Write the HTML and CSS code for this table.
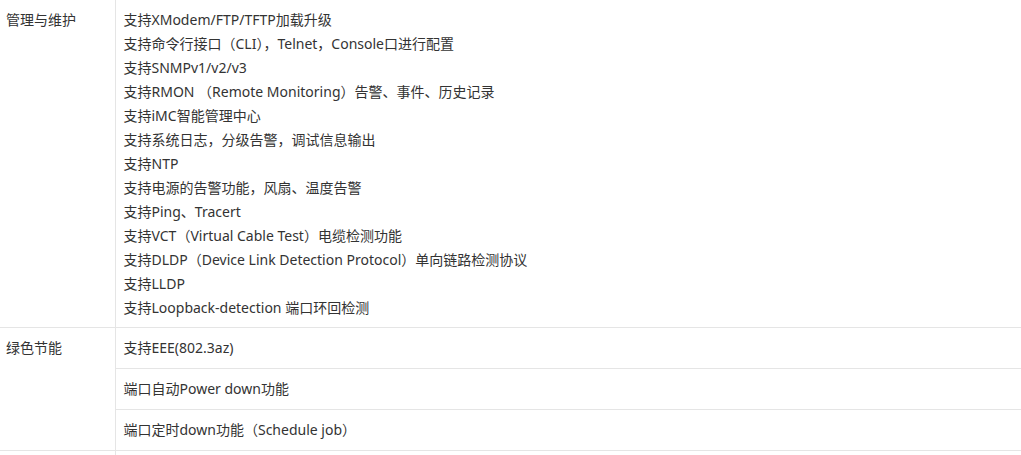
FILE: index.html
```html
<!DOCTYPE html>
<html lang="zh-CN">
<head>
    <meta charset="UTF-8">
    <meta name="viewport" content="width=device-width, initial-scale=1.0">
    <title>产品规格</title>
    <link rel="stylesheet" href="styles.css">
</head>
<body>
    <table class="spec-table">
        <colgroup>
            <col class="col-name">
            <col class="col-value">
        </colgroup>
        <tr class="first-row">
            <td class="name">管理与维护</td>
            <td class="value">
                支持XModem/FTP/TFTP加载升级<br>
                支持命令行接口（CLI），Telnet，Console口进行配置<br>
                支持SNMPv1/v2/v3<br>
                支持RMON （Remote Monitoring）告警、事件、历史记录<br>
                支持iMC智能管理中心<br>
                支持系统日志，分级告警，调试信息输出<br>
                支持NTP<br>
                支持电源的告警功能，风扇、温度告警<br>
                支持Ping、Tracert<br>
                支持VCT（Virtual Cable Test）电缆检测功能<br>
                支持DLDP（Device Link Detection Protocol）单向链路检测协议<br>
                支持LLDP<br>
                支持Loopback-detection 端口环回检测
            </td>
        </tr>
        <tr>
            <td class="name" rowspan="3">绿色节能</td>
            <td class="value">支持EEE(802.3az)</td>
        </tr>
        <tr>
            <td class="value">端口自动Power down功能</td>
        </tr>
        <tr>
            <td class="value">端口定时down功能（Schedule job）</td>
        </tr>
        <tr>
            <td class="name">&nbsp;</td>
            <td class="value">&nbsp;</td>
        </tr>
    </table>
</body>
</html>
```

FILE: styles.css
```css
body {
    margin: 0;
    overflow: hidden;
    background-color: #fff;
    font-family: "Microsoft YaHei", "Segoe UI", "Noto Sans", "Noto Sans CJK SC", sans-serif;
    font-size: 14px;
    color: #333;
}

.spec-table {
    width: 1040px;
    margin-top: -1px;
    border-collapse: collapse;
    table-layout: fixed;
}

.col-name {
    width: 115px;
}

.spec-table td {
    border: 1px solid #e5e5e5;
    vertical-align: top;
    line-height: 24px;
    padding: 8px 8px;
}

.spec-table .first-row td {
    padding-bottom: 7px;
}

.spec-table td.name {
    border-left: none;
    padding-left: 6px;
}
```
